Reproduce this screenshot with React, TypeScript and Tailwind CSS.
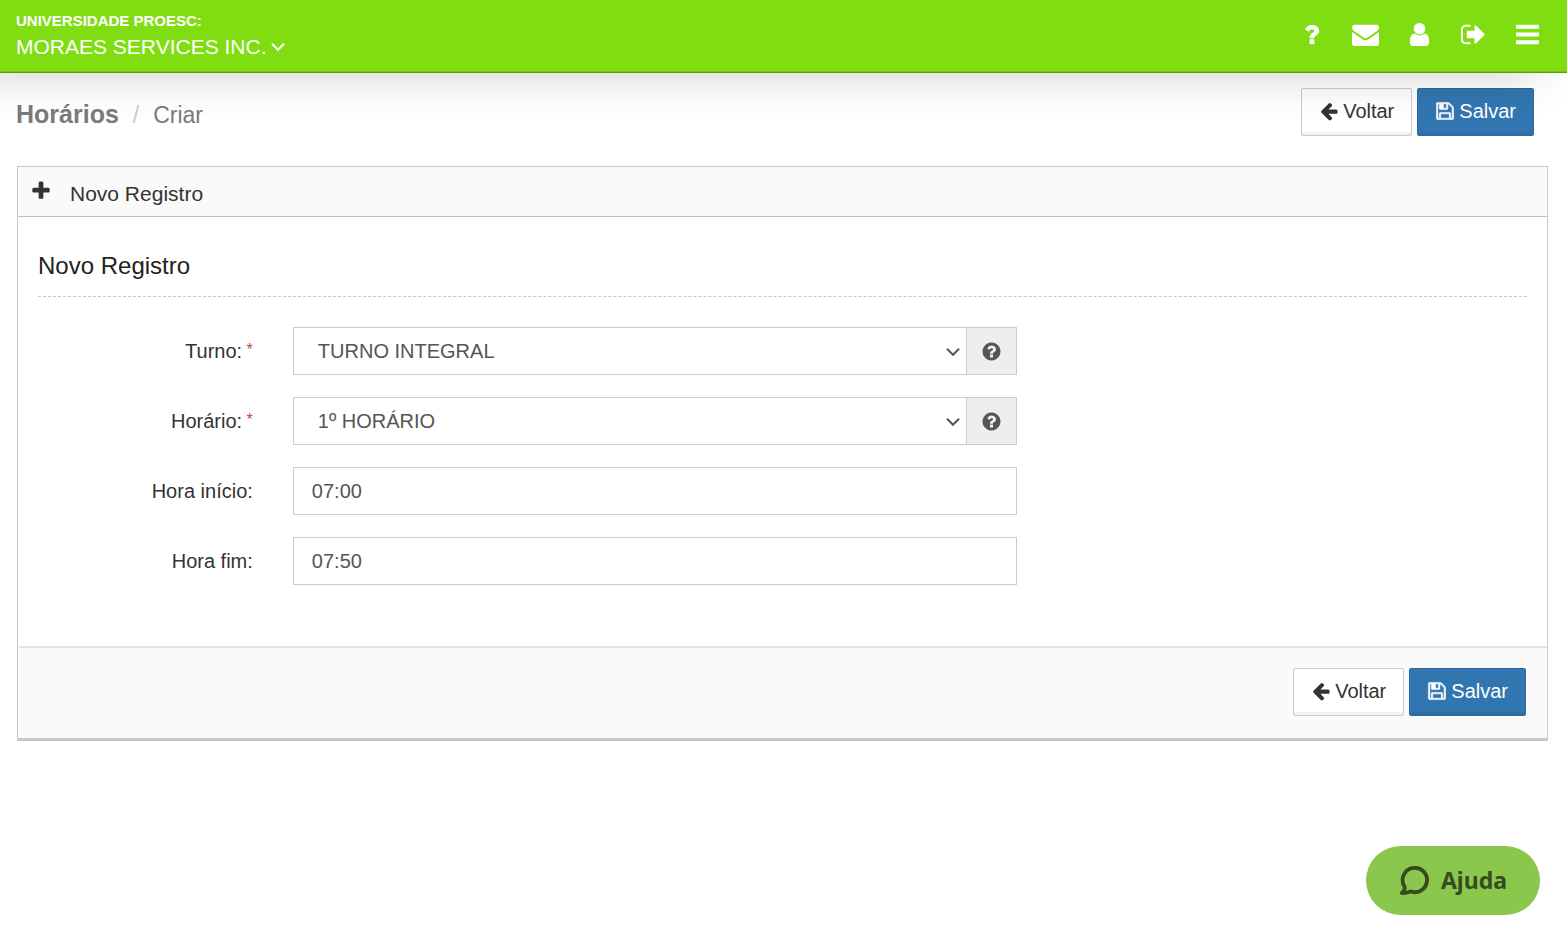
import React, { useState } from 'react';

// Font Awesome 4 glyphs, all drawn on a 1792 grid
const ICONS = {
  question:
    'M1088 1256v240q0 16-12 28t-28 12h-240q-16 0-28-12t-12-28v-240q0-16 12-28t28-12h240q16 0 28 12t12 28zm316-600q0 54-15.5 101t-35 76.5-55 59.5-57.5 43.5-61 35.5q-41 23-68.5 65t-27.5 67q0 17-12 32.5t-28 15.5h-240q-15 0-25.5-18.5t-10.5-37.5v-45q0-83 65-156.5t143-108.5q59-27 84-56t25-76q0-42-46.5-74t-107.5-32q-65 0-108 29-35 25-107 115-13 16-31 16-12 0-25-8l-164-125q-13-10-15.5-25t5.5-28q160-266 464-266 80 0 161 31t146 83 106 127.5 41 158.5z',
  envelope:
    'M1792 710v794q0 66-47 113t-113 47h-1472q-66 0-113-47t-47-113v-794q44 49 101 87 362 246 497 345 57 42 92.5 65.5t94.5 48 110 24.5h2q51 0 110-24.5t94.5-48 92.5-65.5q170-123 498-345 57-39 100-87zm0-294q0 79-49 151t-122 123q-376 261-468 325-10 7-42.5 31t-54 38.5-52 32.5-57.5 27-50 9h-2q-23 0-50-9t-57.5-27-52-32.5-54-38.5-42.5-31q-91-64-262-182.5t-205-142.5q-62-42-117-115.5t-55-136.5q0-78 41.5-130t118.5-52h1472q65 0 112.5 47t47.5 113z',
  user:
    'M1536 1399q0 109-62.5 187t-150.5 78h-854q-88 0-150.5-78t-62.5-187q0-85 8.5-160.5t31.5-152 58.5-131 94-89 134.5-34.5q131 128 313 128t313-128q76 0 134.5 34.5t94 89 58.5 131 31.5 152 8.5 160.5zm-256-887q0 159-112.5 271.5t-271.5 112.5-271.5-112.5-112.5-271.5 112.5-271.5 271.5-112.5 271.5 112.5 112.5 271.5z',
  signOut:
    'M704 1440q0 4 1 20t.5 26.5-3 23.5-10 19.5-20.5 6.5h-320q-119 0-203.5-84.5t-84.5-203.5v-704q0-119 84.5-203.5t203.5-84.5h320q13 0 22.5 9.5t9.5 22.5q0 4 1 20t.5 26.5-3 23.5-10 19.5-20.5 6.5h-320q-66 0-113 47t-47 113v704q0 66 47 113t113 47h312l11.5 1 11.5 3 8 5.5 7 9 2 13.5zm928-544q0 26-19 45l-544 544q-19 19-45 19t-45-19-19-45v-288h-448q-26 0-45-19t-19-45v-384q0-26 19-45t45-19h448v-288q0-26 19-45t45-19 45 19l544 544q19 19 19 45z',
  bars:
    'M1664 1344v128q0 26-19 45t-45 19h-1408q-26 0-45-19t-19-45v-128q0-26 19-45t45-19h1408q26 0 45 19t19 45zm0-512v128q0 26-19 45t-45 19h-1408q-26 0-45-19t-19-45v-128q0-26 19-45t45-19h1408q26 0 45 19t19 45zm0-512v128q0 26-19 45t-45 19h-1408q-26 0-45-19t-19-45v-128q0-26 19-45t45-19h1408q26 0 45 19t19 45z',
  arrowLeft:
    'M1664 896v128q0 53-32.5 90.5t-84.5 37.5h-704l293 294q38 36 38 90t-38 90l-75 76q-37 37-90 37-52 0-91-37l-651-652q-37-37-37-90 0-52 37-91l651-650q38-38 91-38 52 0 90 38l75 74q38 38 38 91t-38 91l-293 293h704q52 0 84.5 37.5t32.5 90.5z',
  save:
    'M512 1536h768v-384h-768v384zm896 0h128v-896q0-14-10-38.5t-20-34.5l-281-281q-10-10-34-20t-39-10v416q0 40-28 68t-68 28h-576q-40 0-68-28t-28-68v-416h-128v1280h128v-416q0-40 28-68t68-28h832q40 0 68 28t28 68v416zm-384-928v-320q0-13-9.5-22.5t-22.5-9.5h-192q-13 0-22.5 9.5t-9.5 22.5v320q0 13 9.5 22.5t22.5 9.5h192q13 0 22.5-9.5t9.5-22.5zm640 32v928q0 40-28 68t-68 28h-1344q-40 0-68-28t-28-68v-1344q0-40 28-68t68-28h928q40 0 88 20t76 48l280 280q28 28 48 76t20 88z',
  questionCircle:
    'M1024 1376v-192q0-14-9-23t-23-9h-192q-14 0-23 9t-9 23v192q0 14 9 23t23 9h192q14 0 23-9t9-23zm256-672q0-88-55.5-163t-138.5-116-170-41q-243 0-371 213-15 24 8 42l132 100q7 6 19 6 16 0 25-12 53-68 86-92 34-24 86-24 48 0 85.5 26t37.5 59q0 38-20 61t-68 45q-63 28-115.5 86.5t-52.5 125.5v36q0 14 9 23t23 9h192q14 0 23-9t9-23q0-19 21.5-49.5t54.5-49.5q32-18 49-28.5t46-35 44.5-48 28-60.5 12.5-81zm384 192q0 209-103 385.5t-279.5 279.5-385.5 103-385.5-103-279.5-279.5-103-385.5 103-385.5 279.5-279.5 385.5-103 385.5 103 279.5 279.5 103 385.5z',
  plus:
    'M1600 736v192q0 40-28 68t-68 28h-416v416q0 40-28 68t-68 28h-192q-40 0-68-28t-28-68v-416h-416q-40 0-68-28t-28-68v-192q0-40 28-68t68-28h416v-416q0-40 28-68t68-28h192q40 0 68 28t28 68v416h416q40 0 68 28t28 68z',
};

interface IconProps {
  name: keyof typeof ICONS;
  className?: string;
}

const Icon: React.FC<IconProps> = ({ name, className = 'size-5' }) => (
  <svg className={`shrink-0 ${className}`} viewBox="0 0 1792 1792" fill="currentColor" aria-hidden="true">
    <path d={ICONS[name]} />
  </svg>
);

const Chevron: React.FC<{ className?: string }> = ({ className = '' }) => (
  <svg className={className} width="14" height="10" viewBox="0 0 14 10" fill="none" stroke="currentColor" strokeWidth="2" aria-hidden="true">
    <path d="M1 1.8L7 7.8L13 1.8" />
  </svg>
);

const NAV_ITEMS: { icon: keyof typeof ICONS; label: string }[] = [
  { icon: 'question', label: 'Dúvidas' },
  { icon: 'envelope', label: 'Mensagens' },
  { icon: 'user', label: 'Perfil' },
  { icon: 'signOut', label: 'Sair' },
  { icon: 'bars', label: 'Menu' },
];

const ActionButtons: React.FC = () => (
  <div className="flex gap-[5px]">
    <button
      type="button"
      className="flex h-12 items-center gap-1 rounded-xs border border-[#ccc] bg-white px-[17px] pb-0.5 text-xl text-[#333] shadow-[inset_0_-3px_0_rgba(0,0,0,0.05)]"
    >
      <Icon name="arrowLeft" />
      Voltar
    </button>
    <button
      type="submit"
      form="schedule-form"
      className="flex h-12 items-center gap-1 rounded-xs border border-[#2c699d] bg-[#3276b1] px-[17px] pb-0.5 text-xl text-white shadow-[inset_0_-3px_0_rgba(0,0,0,0.05)]"
    >
      <Icon name="save" className="size-5 stroke-current stroke-[50]" />
      Salvar
    </button>
  </div>
);

interface FieldProps {
  id: string;
  label: string;
  required?: boolean;
  children: React.ReactNode;
}

const Field: React.FC<FieldProps> = ({ id, label, required, children }) => (
  <div className="grid grid-cols-12">
    <label htmlFor={id} className="col-span-2 px-5 pt-2.5 text-right text-xl text-[#333]">
      {label}
      {required && <span className="text-base align-[3px] text-[#b94a48]"> *</span>}
    </label>
    <div className="col-span-6 px-5">{children}</div>
  </div>
);

interface SelectFieldProps {
  id: string;
  options: string[];
}

const SelectField: React.FC<SelectFieldProps> = ({ id, options }) => {
  const [value, setValue] = useState(options[0]);

  return (
    <div className="flex h-12 border border-[#ccc]">
      <div className="relative flex-1">
        <select
          id={id}
          value={value}
          onChange={(e) => setValue(e.target.value)}
          className="h-full w-full appearance-none bg-white pl-6 pr-8 text-xl text-[#555] outline-none"
        >
          {options.map((option) => (
            <option key={option}>{option}</option>
          ))}
        </select>
        <Chevron className="pointer-events-none absolute right-1.5 top-[19px] text-[#555]" />
      </div>
      <button
        type="button"
        aria-label="Ajuda do campo"
        className="flex w-[50px] items-center justify-center border-l border-[#ccc] bg-[#eee] text-[#555]"
      >
        <Icon name="questionCircle" className="size-[21px]" />
      </button>
    </div>
  );
};

const TimeField: React.FC<{ id: string; initial: string }> = ({ id, initial }) => {
  const [value, setValue] = useState(initial);

  return (
    <input
      id={id}
      type="text"
      value={value}
      onChange={(e) => setValue(e.target.value)}
      className="block h-12 w-full border border-[#ccc] bg-white px-[18px] text-xl text-[#555] outline-none"
    />
  );
};

const App: React.FC = () => {
  return (
    <div className="min-h-screen overflow-x-hidden bg-white font-['Liberation_Sans',Arial,sans-serif] text-[#333]">
      <header className="pointer-events-none relative z-10 flex items-stretch justify-between border-b border-[#5a9c0a] bg-[#80dd12] shadow-[-30px_0_50px_rgba(0,0,0,0.2),inset_0_-1px_0_#72c410]">
        <div className="pointer-events-auto pb-3 pl-4 pt-2 text-white">
          <div className="text-[15px] font-bold leading-[26px]">UNIVERSIDADE PROESC:</div>
          <button type="button" className="flex items-center gap-1 text-[21px] leading-[26px]">
            MORAES SERVICES INC.
            <Chevron />
          </button>
        </div>
        <nav className="pointer-events-auto flex items-center pb-1 pr-[13px] text-white">
          {NAV_ITEMS.map(({ icon, label }) => (
            <a key={icon} href="#" aria-label={label} className="flex w-[54px] justify-center">
              <Icon name={icon} className="size-[27px]" />
            </a>
          ))}
        </nav>
      </header>

      <main>
        <div className="flex items-start justify-between pl-4 pr-[33px] pt-[15px]">
          <h1 className="flex items-baseline pt-2 text-[#7b7b7b]">
            <span className="text-[25px] font-bold">Horários</span>
            <span className="px-3.5 text-[23px] text-[#ccc]">/</span>
            <span className="text-[23px]">Criar</span>
          </h1>
          <ActionButtons />
        </div>

        <section className="ml-[17px] mr-[19px] mt-[30px] border border-b-3 border-[#c8c8c8]">
          <header className="flex h-[50px] items-center border-b border-[#c2c2c2] bg-[#fafafa] pl-3">
            <Icon name="plus" className="mb-0.5 size-[22px]" />
            <h2 className="pl-[18px] pt-1 text-[21px]">Novo Registro</h2>
          </header>

          <form id="schedule-form" onSubmit={(e) => e.preventDefault()}>
            <div className="pb-[61px] pt-[33px]">
              <h3 className="mx-5 mb-[30px] border-b border-dashed border-[#c8c8c8] pb-3.5 text-2xl text-[#222]">
                Novo Registro
              </h3>
              <div className="flex flex-col gap-[22px]">
                <Field id="turno" label="Turno:" required>
                  <SelectField id="turno" options={['TURNO INTEGRAL']} />
                </Field>
                <Field id="horario" label="Horário:" required>
                  <SelectField id="horario" options={['1º HORÁRIO']} />
                </Field>
                <Field id="hora-inicio" label="Hora início:">
                  <TimeField id="hora-inicio" initial="07:00" />
                </Field>
                <Field id="hora-fim" label="Hora fim:">
                  <TimeField id="hora-fim" initial="07:50" />
                </Field>
              </div>
            </div>
          </form>

          <footer className="ml-px flex justify-end border-t-2 border-[#e2e2e2] bg-[#fafafa] pb-[22px] pr-[21px] pt-5">
            <ActionButtons />
          </footer>
        </section>
      </main>

      <button
        type="button"
        className="fixed bottom-5 right-[27px] flex h-[69px] items-center gap-3 rounded-full bg-[#8bc74d] px-[33px] font-['Noto_Sans',sans-serif] text-[23px] font-bold text-[#384a1f]"
      >
        <svg className="size-[30px]" viewBox="0 1 30 30" fill="none" stroke="currentColor" strokeWidth="3.8" strokeLinecap="round" strokeLinejoin="round" aria-hidden="true">
          <path d="M11.2 26.3A12.2 12.2 0 1 0 5.3 21.2C6.4 23.2 5.6 25.6 2.9 28C6.2 28.3 9 27.6 11.2 26.3Z" />
        </svg>
        Ajuda
      </button>
    </div>
  );
};

export default App;
